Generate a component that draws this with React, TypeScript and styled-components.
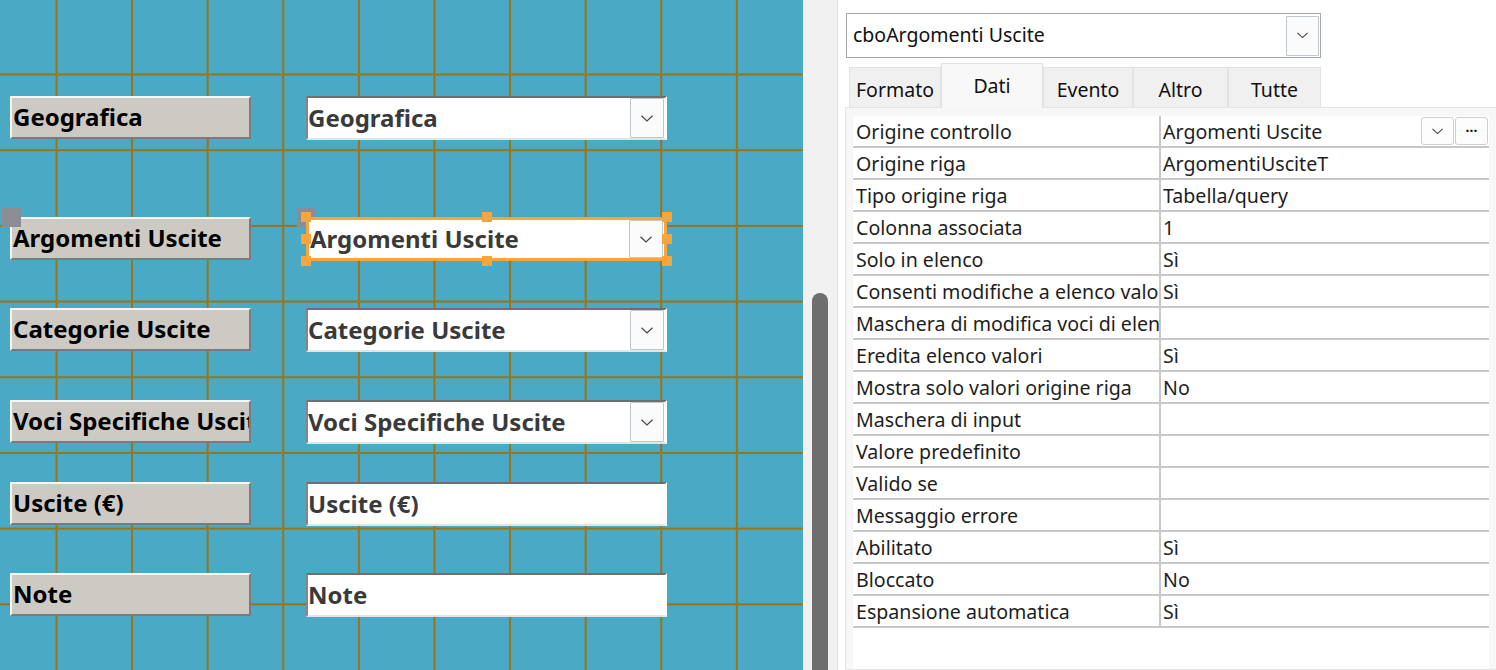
import React from "react";
import styled, { createGlobalStyle } from "styled-components";

const GlobalStyle = createGlobalStyle`
  body {
    margin: 0;
    overflow: hidden;
    background: #fff;
  }
`;

const Screen = styled.div`
  display: flex;
  width: 1496px;
  height: 670px;
  overflow: hidden;
`;

/* ---------- form designer canvas ---------- */

const Canvas = styled.div`
  width: 803px;
  flex-shrink: 0;
  height: 100%;
  padding-left: 10px;
  box-sizing: border-box;
  background-color: #4aaac6;
  background-image: linear-gradient(to right, #9b7414 1.5px, transparent 1.5px),
    linear-gradient(to bottom, #9b7414 1.5px, transparent 1.5px);
  background-size: 75.6px 75.7px;
  background-position: 55.5px 73.5px;
  display: flex;
  flex-direction: column;
`;

const FormRow = styled.div<{ $top: number }>`
  display: flex;
  align-items: flex-start;
  gap: 55px;
  margin-top: ${(p) => p.$top}px;
  height: 44px;
`;

const Wrap = styled.div`
  position: relative;
  flex-shrink: 0;
`;

const Label = styled.div`
  width: 241px;
  height: 43px;
  box-sizing: border-box;
  background: #cdcac4;
  border-style: solid;
  border-width: 2px;
  border-color: #f6f6f6 #7b7b7b #7b7b7b #f6f6f6;
  padding: 0 0 2px 1px;
  display: flex;
  align-items: center;
  overflow: hidden;
  white-space: nowrap;
  font-family: "Noto Sans", "Open Sans", sans-serif;
  font-weight: 700;
  font-size: 24px;
  color: #000;
`;

const Combo = styled.div<{ $selected?: boolean }>`
  position: relative;
  width: 361px;
  height: 44px;
  box-sizing: border-box;
  background: #fff;
  border-style: solid;
  border-width: ${(p) => (p.$selected ? "3px" : "2px")};
  border-color: ${(p) =>
    p.$selected ? "#f8a53b" : "#6f6f6f #fff #e4e4e4 #858585"};
  padding: 0 0 2px ${(p) => (p.$selected ? "1px" : "0px")};
  display: flex;
  align-items: center;
  overflow: hidden;
  white-space: nowrap;
  font-family: "Noto Sans", "Open Sans", sans-serif;
  font-weight: 700;
  font-size: 24px;
  color: #3a3a3a;
`;

const DropButton = styled.div<{ $w: number; $h: number }>`
  position: absolute;
  right: 1px;
  top: 50%;
  transform: translateY(-50%);
  width: ${(p) => p.$w}px;
  height: ${(p) => p.$h}px;
  box-sizing: border-box;
  background: #fbfbfb;
  border: 1px solid #bfc7ce;
  border-radius: 1px;
  display: flex;
  align-items: center;
  justify-content: center;
`;

const Handle = styled.span<{ $x: string; $y: string }>`
  position: absolute;
  left: ${(p) => p.$x};
  top: ${(p) => p.$y};
  width: 10px;
  height: 10px;
  margin: -5px 0 0 -5px;
  background: #f8a53b;
`;

const MoveHandle = styled.span<{ $x: number }>`
  position: absolute;
  left: ${(p) => p.$x}px;
  top: -9px;
  width: 19px;
  height: 19px;
  background: #8a8d94;
`;

/* ---------- vertical scrollbar ---------- */

const ScrollStrip = styled.div`
  width: 35px;
  flex-shrink: 0;
  background: #f1f1f1;
  border-right: 1px solid #dedede;
  box-sizing: border-box;
  display: flex;
  justify-content: flex-start;
  padding-left: 9px;
`;

const Thumb = styled.div`
  width: 16px;
  margin-top: 293px;
  height: 400px;
  background: #6e6e6e;
  border-radius: 8px 8px 0 0;
`;

/* ---------- property sheet ---------- */

const Panel = styled.div`
  flex: 1;
  display: flex;
  flex-direction: column;
  background: #fff;
  font-family: "Noto Sans", "Open Sans", sans-serif;
  color: #1e1e1e;
  min-width: 0;
`;

const ObjectPicker = styled.div`
  position: relative;
  margin: 13px 0 0 8px;
  width: 475px;
  height: 45px;
  box-sizing: border-box;
  border: 1px solid #a9a9a9;
  padding: 0 0 3px 6px;
  display: flex;
  align-items: center;
  font-size: 19.5px;
  color: #111;
`;

const TabBar = styled.div`
  display: flex;
  align-items: flex-end;
  margin: 5px 0 0 11px;
  height: 44px;
`;

const Tab = styled.div<{ $active?: boolean; $w: number }>`
  width: ${(p) => p.$w}px;
  height: ${(p) => (p.$active ? 45 : 40)}px;
  box-sizing: border-box;
  background: ${(p) => (p.$active ? "#f8f8f8" : "#f0f0f0")};
  border: 1px solid #e2e2e2;
  border-bottom: none;
  margin-bottom: ${(p) => (p.$active ? -1 : 0)}px;
  position: relative;
  z-index: ${(p) => (p.$active ? 1 : 0)};
  display: flex;
  justify-content: center;
  align-items: ${(p) => (p.$active ? "flex-start" : "center")};
  padding-top: ${(p) => (p.$active ? 8 : 4)}px;
  font-size: 19.5px;
  color: #111;
`;

const Sheet = styled.div`
  flex: 1;
  margin-left: 7px;
  background: #f7f7f7;
  border: 1px solid #e4e4e4;
  border-right: none;
  padding: 8px 7px 0 7px;
  display: flex;
  flex-direction: column;
`;

const Table = styled.div`
  flex: 1;
  width: 636px;
  background: #fff;
`;

const PropRow = styled.div`
  display: grid;
  grid-template-columns: 306px 2px 1fr;
  height: 32px;
  box-sizing: border-box;
  border-bottom: 2px solid #c7c7c7;
  font-size: 19.6px;
  line-height: 30px;
  padding-top: 1px;
`;

const PropName = styled.div`
  padding-left: 3px;
  overflow: hidden;
  white-space: nowrap;
`;

const Divider = styled.div`
  background: #c7c7c7;
  margin-top: -1px;
`;

const PropValue = styled.div`
  position: relative;
  padding-left: 2px;
  white-space: nowrap;
`;

const CellButton = styled.div<{ $right: number }>`
  position: absolute;
  right: ${(p) => p.$right}px;
  top: 0px;
  width: 33px;
  height: 28px;
  box-sizing: border-box;
  background: #fdfdfd;
  border: 1px solid #cfcfcf;
  border-radius: 3px;
  display: flex;
  align-items: center;
  justify-content: center;
  font-size: 14px;
  font-weight: 700;
  line-height: 1;
  color: #111;
`;

const Chevron = ({ w = 12 }: { w?: number }) => (
  <svg width={w} height={w / 2 + 1} viewBox="0 0 12 7">
    <polyline points="0.5,0.8 6,6 11.5,0.8" fill="none" stroke="#444" strokeWidth="1.2" />
  </svg>
);

const rows = [
  { top: 96, label: "Geografica", combo: true },
  { top: 77, label: "Argomenti Uscite", combo: true, selected: true },
  { top: 47, label: "Categorie Uscite", combo: true },
  { top: 48, label: "Voci Specifiche Uscite", combo: true },
  { top: 38, label: "Uscite (€)", combo: false },
  { top: 47, label: "Note", combo: false },
];

const props: [string, string][] = [
  ["Origine controllo", "Argomenti Uscite"],
  ["Origine riga", "ArgomentiUsciteT"],
  ["Tipo origine riga", "Tabella/query"],
  ["Colonna associata", "1"],
  ["Solo in elenco", "Sì"],
  ["Consenti modifiche a elenco valori", "Sì"],
  ["Maschera di modifica voci di elenco", ""],
  ["Eredita elenco valori", "Sì"],
  ["Mostra solo valori origine riga", "No"],
  ["Maschera di input", ""],
  ["Valore predefinito", ""],
  ["Valido se", ""],
  ["Messaggio errore", ""],
  ["Abilitato", "Sì"],
  ["Bloccato", "No"],
  ["Espansione automatica", "Sì"],
];

const handles: [string, string][] = [
  ["0%", "0%"], ["50%", "0%"], ["100%", "0%"],
  ["0%", "50%"], ["100%", "50%"],
  ["0%", "100%"], ["50%", "100%"], ["100%", "100%"],
];

export default function App() {
  return (
    <Screen>
      <GlobalStyle />
      <Canvas>
        {rows.map((r) => (
          <FormRow key={r.label} $top={r.top}>
            <Wrap>
              {r.selected && <MoveHandle $x={-8} />}
              <Label>{r.label}</Label>
            </Wrap>
            <Wrap>
              {r.selected && <MoveHandle $x={-9} />}
              <Combo $selected={r.selected}>
                {r.label}
                {r.combo && (
                  <DropButton $w={34} $h={r.selected ? 38 : 40}>
                    <Chevron />
                  </DropButton>
                )}
              </Combo>
              {r.selected &&
                handles.map(([x, y]) => <Handle key={x + y} $x={x} $y={y} />)}
            </Wrap>
          </FormRow>
        ))}
      </Canvas>
      <ScrollStrip>
        <Thumb />
      </ScrollStrip>
      <Panel>
        <ObjectPicker>
          cboArgomenti Uscite
          <DropButton $w={33} $h={40}>
            <Chevron w={11} />
          </DropButton>
        </ObjectPicker>
        <TabBar>
          <Tab $w={92}>Formato</Tab>
          <Tab $w={102} $active>Dati</Tab>
          <Tab $w={90}>Evento</Tab>
          <Tab $w={95}>Altro</Tab>
          <Tab $w={93}>Tutte</Tab>
        </TabBar>
        <Sheet>
          <Table>
            {props.map(([name, value], i) => (
              <PropRow key={name}>
                <PropName>{name}</PropName>
                <Divider />
                <PropValue>
                  {value}
                  {i === 0 && (
                    <>
                      <CellButton $right={35}>
                        <Chevron w={11} />
                      </CellButton>
                      <CellButton $right={1}>···</CellButton>
                    </>
                  )}
                </PropValue>
              </PropRow>
            ))}
          </Table>
        </Sheet>
      </Panel>
    </Screen>
  );
}
